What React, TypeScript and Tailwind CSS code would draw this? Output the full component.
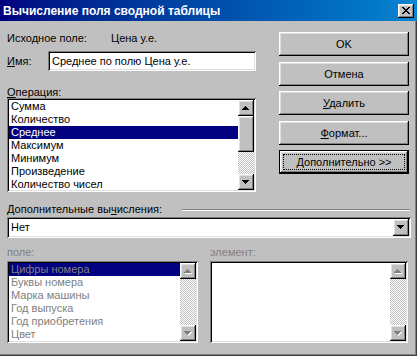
import React from "react";

const RAISED =
  "shadow-[inset_-1px_-1px_#000000,inset_1px_1px_#ffffff,inset_-2px_-2px_#808080,inset_2px_2px_#dfdfdf]";
const SUNKEN =
  "shadow-[inset_1px_1px_#808080,inset_-1px_-1px_#ffffff,inset_2px_2px_#000000,inset_-2px_-2px_#dfdfdf]";

function Tri({ dir, disabled }: { dir: "up" | "down"; disabled?: boolean }) {
  const rows = dir === "up" ? [[3, 1], [2, 3], [1, 5], [0, 7]] : [[0, 7], [1, 5], [2, 3], [3, 1]];
  return (
    <svg width="8" height="5" viewBox="0 0 8 5" shapeRendering="crispEdges">
      {disabled &&
        rows.map(([x, w], i) => <rect key={"s" + i} x={x + 1} y={i + 1} width={w} height={1} fill="#ffffff" />)}
      {rows.map(([x, w], i) => (
        <rect key={i} x={x} y={i} width={w} height={1} fill={disabled ? "#808080" : "#000000"} />
      ))}
    </svg>
  );
}

function ScrollBtn({ dir, disabled }: { dir: "up" | "down"; disabled?: boolean }) {
  return (
    <div className={`w-[16px] h-[16px] shrink-0 bg-[#c0c0c0] flex items-center justify-center ${RAISED}`}>
      <Tri dir={dir} disabled={disabled} />
    </div>
  );
}

function Track({ className }: { className?: string }) {
  return (
    <div
      className={`w-[16px] [background-image:repeating-conic-gradient(#c0c0c0_0%_25%,#ffffff_0%_50%)] [background-size:2px_2px] ${className ?? ""}`}
    />
  );
}

function Button({
  children,
  isDefault,
  className,
}: {
  children: React.ReactNode;
  isDefault?: boolean;
  className?: string;
}) {
  if (isDefault) {
    return (
      <div className={`relative h-[24px] border border-black ${className ?? ""}`}>
        <div className={`w-full h-full flex items-center justify-center ${RAISED}`}>{children}</div>
        <div className="absolute inset-[3px] border border-dotted border-black" />
      </div>
    );
  }
  return (
    <div className={`h-[24px] flex items-center justify-center ${RAISED} ${className ?? ""}`}>{children}</div>
  );
}

const U = ({ children }: { children: React.ReactNode }) => (
  <span className="underline underline-offset-[1px] decoration-1">{children}</span>
);

function CloseGlyph() {
  const rows = [
    [[0, 2], [6, 2]],
    [[1, 2], [5, 2]],
    [[2, 4]],
    [[3, 2]],
    [[2, 4]],
    [[1, 2], [5, 2]],
    [[0, 2], [6, 2]],
  ];
  return (
    <svg width="8" height="7" viewBox="0 0 8 7" shapeRendering="crispEdges">
      {rows.map((r, y) => r.map(([x, w], j) => <rect key={y + "-" + j} x={x} y={y} width={w} height={1} fill="#000" />))}
    </svg>
  );
}

export default function App() {
  const ops = ["Сумма", "Количество", "Среднее", "Максимум", "Минимум", "Произведение", "Количество чисел"];
  const fields = ["Цифры номера", "Буквы номера", "Марка машины", "Год выпуска", "Год приобретения", "Цвет"];

  return (
    <div className="w-[417px] h-[356px] bg-[#c0c0c0] flex flex-col overflow-hidden text-[11px] leading-[13px] text-black font-['Liberation_Sans',Arial,sans-serif] shadow-[inset_-1px_-1px_#404040,inset_-2px_-2px_#808080]">
      {/* Title bar */}
      <div className="h-[21px] shrink-0 flex items-center pl-[3px] pr-[3px] bg-linear-to-r from-[#000080] to-[#1084d0]">
        <div className="text-white font-bold text-[12px] leading-[14px] flex-1">Вычисление поля сводной таблицы</div>
        <div className={`w-[16px] h-[14px] bg-[#c0c0c0] flex items-center justify-center ${RAISED}`}>
          <CloseGlyph />
        </div>
      </div>

      {/* Top part */}
      <div className="flex px-[7px]">
        <div className="w-[249px] flex flex-col pt-[11px]">
          <div className="h-[13px] flex">
            <span className="w-[104px]">Исходное поле:</span>
            <span>Цена у.е.</span>
          </div>
          <div className="mt-[6px] h-[20px] flex items-center">
            <span className="w-[41px]">
              <U>И</U>мя:
            </span>
            <div className={`w-[208px] h-[20px] bg-white flex items-center pl-[4px] ${SUNKEN}`}>
              Среднее по полю Цена у.е.
            </div>
          </div>
          <div className="mt-[15px] h-[12px]">
            <U>О</U>перация:
          </div>
          <div className={`h-[94px] bg-white p-[2px] flex ${SUNKEN}`}>
            <div className="flex-1 flex flex-col overflow-hidden">
              {ops.map((o, i) => (
                <div
                  key={o}
                  className={`h-[13px] shrink-0 pl-[2px] ${i === 2 ? "bg-[#000080] text-white" : ""}`}
                >
                  {o}
                </div>
              ))}
            </div>
            <div className="w-[16px] flex flex-col">
              <ScrollBtn dir="up" />
              <div className={`h-[36px] bg-[#c0c0c0] shrink-0 ${RAISED}`} />
              <Track className="flex-1" />
              <ScrollBtn dir="down" />
            </div>
          </div>
        </div>

        <div className="ml-[23px] w-[130px] flex flex-col pt-[11px]">
          <Button>OK</Button>
          <Button className="mt-[6px]">Отмена</Button>
          <Button className="mt-[5px]">
            <span>
              <U>У</U>далить
            </span>
          </Button>
          <Button className="mt-[6px]">
            <span>
              <U>Ф</U>ормат...
            </span>
          </Button>
          <Button className="mt-[5px]" isDefault>
            <span>
              <U>Д</U>ополнительно &gt;&gt;
            </span>
          </Button>
        </div>
      </div>

      {/* Bottom part */}
      <div className="flex flex-col px-[7px] mt-[11px]">
        <div className="h-[13px] flex items-center">
          <span>
            Дополнительные вы<U>ч</U>исления:
          </span>
          <div className="ml-auto w-[228px] h-[2px] border-t border-t-[#808080] border-b border-b-white" />
        </div>
        <div className={`mt-[1px] w-[404px] h-[21px] bg-white p-[2px] flex ${SUNKEN}`}>
          <div className="flex-1 flex items-center pl-[2px]">Нет</div>
          <ScrollBtnCombo />
        </div>

        <div className="mt-[8px] h-[13px] flex text-[#808080]">
          <span className="w-[203px]">поле:</span>
          <span>элемент:</span>
        </div>

        <div className="mt-[2px] flex">
          <div className={`w-[191px] h-[82px] bg-white p-[2px] flex ${SUNKEN}`}>
            <div className="flex-1 flex flex-col overflow-hidden text-[#808080]">
              {fields.map((f, i) => (
                <div key={f} className={`h-[13px] shrink-0 pl-[2px] ${i === 0 ? "bg-[#000080]" : ""}`}>
                  {f}
                </div>
              ))}
            </div>
            <div className="w-[16px] flex flex-col">
              <ScrollBtn dir="up" disabled />
              <Track className="flex-1" />
              <ScrollBtn dir="down" disabled />
            </div>
          </div>
          <div className={`ml-[12px] w-[198px] h-[82px] bg-white p-[2px] flex ${SUNKEN}`}>
            <div className="flex-1" />
            <div className="w-[16px] flex flex-col">
              <ScrollBtn dir="up" disabled />
              <Track className="flex-1" />
              <ScrollBtn dir="down" disabled />
            </div>
          </div>
        </div>
      </div>
    </div>
  );
}

function ScrollBtnCombo() {
  return (
    <div className={`w-[16px] h-[17px] bg-[#c0c0c0] flex items-center justify-center ${RAISED}`}>
      <Tri dir="down" />
    </div>
  );
}
